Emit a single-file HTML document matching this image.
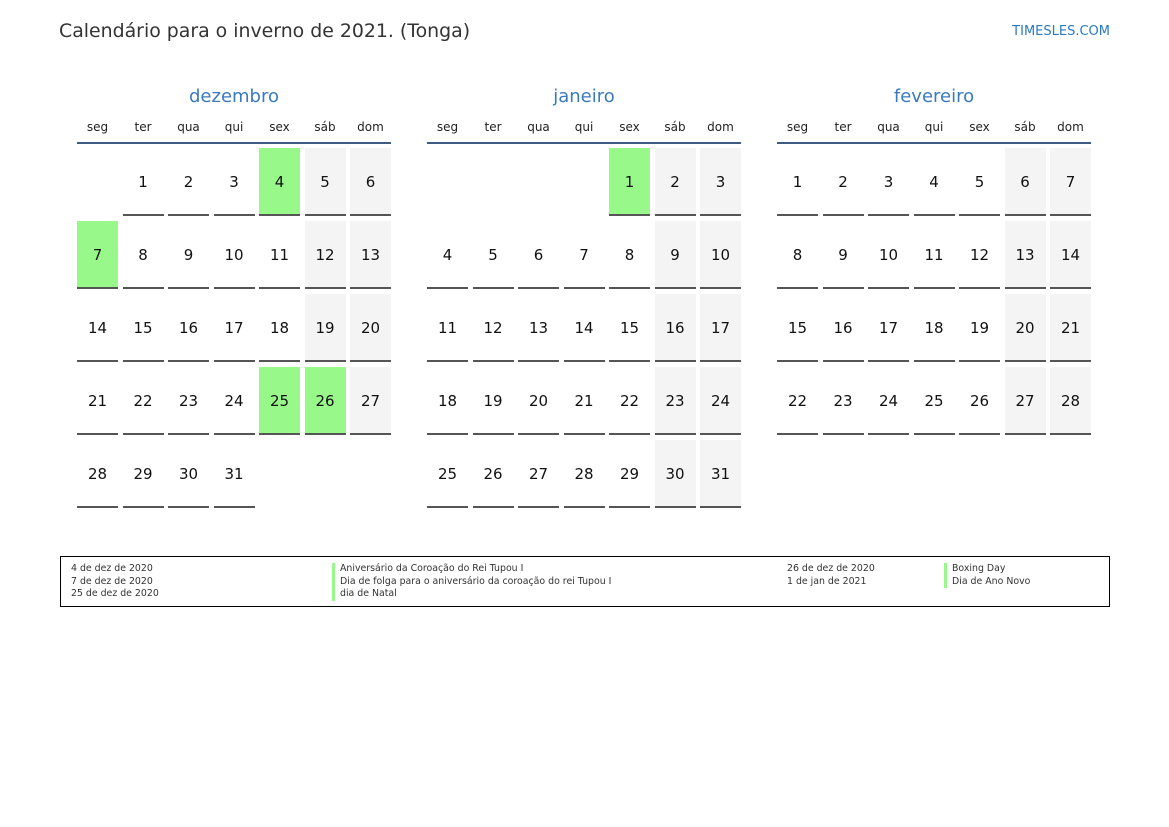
<!DOCTYPE html>
<html><head><meta charset="utf-8"><style>
body{margin:0;width:1169px;height:827px;background:#fff;font-family:"DejaVu Sans","Liberation Sans",sans-serif;position:relative;overflow:hidden}
.t{position:absolute;left:59px;top:20px;font-size:18.9px;color:#333}
.s{position:absolute;right:59px;top:24px;font-size:13px;color:#2a7ac0}
.m{position:absolute;top:84px;width:314px}
.mt{text-align:center;color:#3a7abf;font-size:18px;height:24px;line-height:24px;margin-top:1px}
.wd{display:grid;grid-template-columns:repeat(7,41px);column-gap:4.5px;font-size:12px;color:#222;text-align:center;margin-top:11px;height:22px;line-height:14px}
.ln{height:2px;background:#3d5a80}
.g{display:grid;grid-template-columns:repeat(7,41px);grid-auto-rows:68px;column-gap:4.5px;row-gap:5px;margin-top:4px}
.g div{box-sizing:border-box;border-bottom:2px solid #555;text-align:center;line-height:68px;font-size:15px;color:#111}
.g .e{border:none}
.g .w{background:#f4f4f4}
.g .h{background:#98f98a}
.lg{position:absolute;left:60px;top:556px;width:1048px;height:49px;border:1px solid #000;font-size:9.4px;color:#333}
.lg span{position:absolute;line-height:12.5px}
.b{border-left:3px solid #98f98a;padding-left:5px}
</style></head><body>
<div class="t">Calendário para o inverno de 2021. (Tonga)</div>
<div class="s">TIMESLES.COM</div>

<div class="m" style="left:77px"><div class="mt">dezembro</div>
<div class="wd"><span>seg</span><span>ter</span><span>qua</span><span>qui</span><span>sex</span><span>sáb</span><span>dom</span></div><div class="ln"></div>
<div class="g">
<div class="e"></div><div>1</div><div>2</div><div>3</div><div class="h">4</div><div class="w">5</div><div class="w">6</div>
<div class="h">7</div><div>8</div><div>9</div><div>10</div><div>11</div><div class="w">12</div><div class="w">13</div>
<div>14</div><div>15</div><div>16</div><div>17</div><div>18</div><div class="w">19</div><div class="w">20</div>
<div>21</div><div>22</div><div>23</div><div>24</div><div class="h">25</div><div class="h">26</div><div class="w">27</div>
<div>28</div><div>29</div><div>30</div><div>31</div>
</div></div>

<div class="m" style="left:427px"><div class="mt">janeiro</div>
<div class="wd"><span>seg</span><span>ter</span><span>qua</span><span>qui</span><span>sex</span><span>sáb</span><span>dom</span></div><div class="ln"></div>
<div class="g">
<div class="e"></div><div class="e"></div><div class="e"></div><div class="e"></div><div class="h">1</div><div class="w">2</div><div class="w">3</div>
<div>4</div><div>5</div><div>6</div><div>7</div><div>8</div><div class="w">9</div><div class="w">10</div>
<div>11</div><div>12</div><div>13</div><div>14</div><div>15</div><div class="w">16</div><div class="w">17</div>
<div>18</div><div>19</div><div>20</div><div>21</div><div>22</div><div class="w">23</div><div class="w">24</div>
<div>25</div><div>26</div><div>27</div><div>28</div><div>29</div><div class="w">30</div><div class="w">31</div>
</div></div>

<div class="m" style="left:777px"><div class="mt">fevereiro</div>
<div class="wd"><span>seg</span><span>ter</span><span>qua</span><span>qui</span><span>sex</span><span>sáb</span><span>dom</span></div><div class="ln"></div>
<div class="g">
<div>1</div><div>2</div><div>3</div><div>4</div><div>5</div><div class="w">6</div><div class="w">7</div>
<div>8</div><div>9</div><div>10</div><div>11</div><div>12</div><div class="w">13</div><div class="w">14</div>
<div>15</div><div>16</div><div>17</div><div>18</div><div>19</div><div class="w">20</div><div class="w">21</div>
<div>22</div><div>23</div><div>24</div><div>25</div><div>26</div><div class="w">27</div><div class="w">28</div>
</div></div>

<div class="lg">
<span style="left:10px;top:6px">4 de dez de 2020<br>7 de dez de 2020<br>25 de dez de 2020</span>
<span style="left:271px;top:6px"><span class="b" style="position:static;display:block">Aniversário da Coroação do Rei Tupou I</span><span class="b" style="position:static;display:block">Dia de folga para o aniversário da coroação do rei Tupou I</span><span class="b" style="position:static;display:block">dia de Natal</span></span>
<span style="left:726px;top:6px">26 de dez de 2020<br>1 de jan de 2021</span>
<span style="left:883px;top:6px"><span class="b" style="position:static;display:block">Boxing Day</span><span class="b" style="position:static;display:block">Dia de Ano Novo</span></span>
</div>
</body></html>
